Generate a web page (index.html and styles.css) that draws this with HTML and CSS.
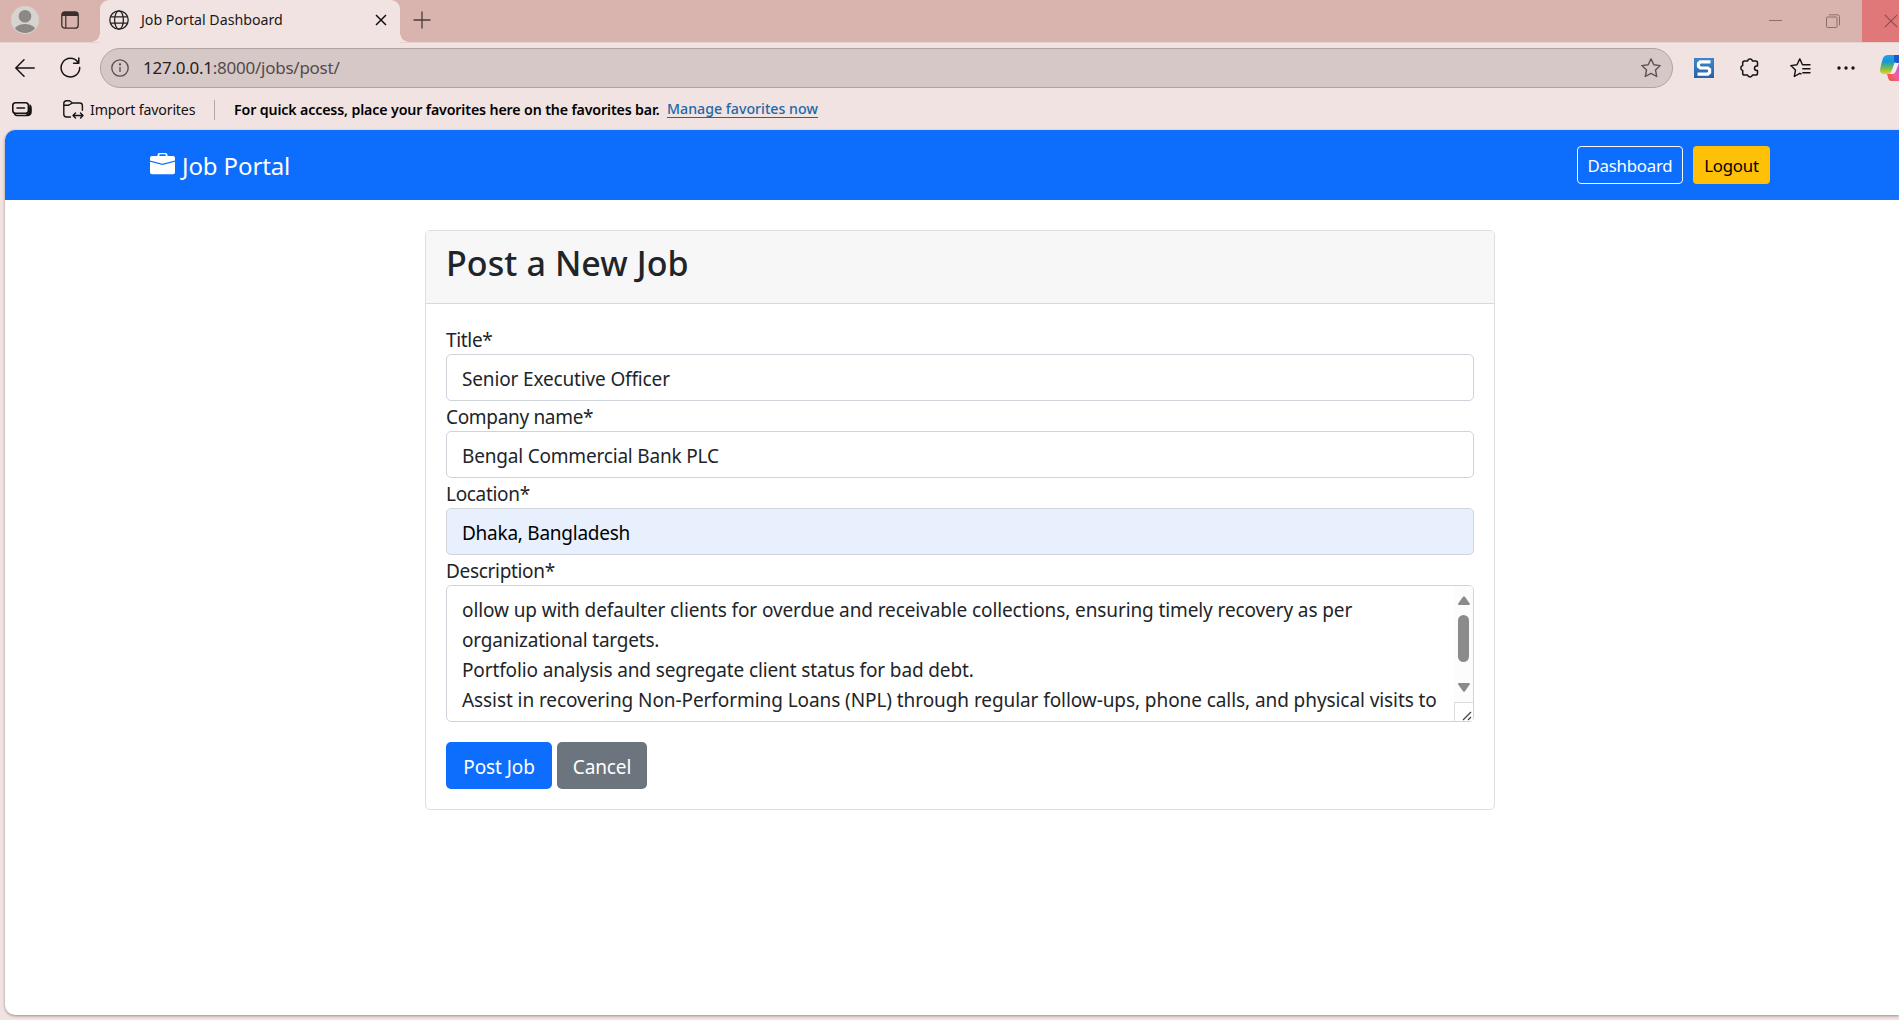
FILE: index.html
```html
<!DOCTYPE html>
<html lang="en">
<head>
<meta charset="utf-8">
<title>Job Portal Dashboard</title>
<link rel="stylesheet" href="styles.css">
</head>
<body>
<header class="tabstrip">
  <div class="tabstrip-left">
    <svg class="avatar" width="28" height="28" viewBox="0 0 28 28"><defs><clipPath id="avatar-clip"><circle cx="14" cy="14" r="13"/></clipPath></defs><circle cx="14" cy="14" r="14" fill="#d6d3d0"/><g clip-path="url(#avatar-clip)" fill="#8b8885"><circle cx="14" cy="10.3" r="6.3"/><ellipse cx="14" cy="25" rx="11" ry="7"/></g></svg>
    <svg class="tab-actions" width="18" height="18" viewBox="0 0 18 18"><rect x=".8" y=".8" width="16.4" height="16.4" rx="3" fill="none" stroke="#3b2f2e" stroke-width="1.3"/><path d="M1 5V3a2 2 0 0 1 2-2h12a2 2 0 0 1 2 2v2z" fill="#3b2f2e"/><path d="M4.8 5v12" stroke="#3b2f2e" stroke-width="1.2"/></svg>
  </div>
  <div class="tab">
    <svg width="20" height="20" viewBox="0 0 20 20" fill="none" stroke="#222" stroke-width="1.3"><circle cx="10" cy="10" r="9.2"/><ellipse cx="10" cy="10" rx="4.4" ry="9.2"/><path d="M1.5 6.8h17M1.5 13.2h17"/></svg>
    <span class="tab-title">Job Portal Dashboard</span>
    <svg class="tab-close" width="12" height="12" viewBox="0 0 12 12"><path d="M1 1l10 10M11 1L1 11" stroke="#111" stroke-width="1.5"/></svg>
  </div>
  <svg class="new-tab" width="18" height="18" viewBox="0 0 18 18"><path d="M9 .5v17M.5 9h17" stroke="#4a3d3c" stroke-width="1.3"/></svg>
  <div class="window-buttons">
    <span class="win"><svg width="13" height="13" viewBox="0 0 13 13"><path d="M0 5.5h13" stroke="#8a6f6c"/></svg></span>
    <span class="win"><svg width="14" height="14" viewBox="0 0 14 14" fill="none" stroke="#8a6f6c"><rect x=".5" y="3" width="10.5" height="10.5" rx="1"/><path d="M3 .8h8.5a2 2 0 0 1 2 2v8.5"/></svg></span>
    <span class="win win-close"><svg width="14" height="14" viewBox="0 0 14 14"><path d="M.8 .8l12.4 12.4M13.2 .8L.8 13.2" stroke="#8d4b4d" stroke-width="1.1"/></svg></span>
  </div>
</header>
<div class="toolbar">
  <svg class="back" width="20" height="18" viewBox="0 0 20 18" fill="none" stroke="#161313" stroke-width="1.5" stroke-linecap="round" stroke-linejoin="round"><path d="M19.2 9H1M9 .8L.8 9 9 17.2"/></svg>
  <svg class="reload" width="21" height="21" viewBox="0 0 21 21" fill="none" stroke="#161313" stroke-width="1.5" stroke-linecap="round" stroke-linejoin="round"><path d="M19.7 10.5A9.3 9.3 0 1 1 17.8 5M18.8 1v5.2h-5.2"/></svg>
  <div class="address">
    <svg width="18" height="18" viewBox="0 0 18 18" fill="none" stroke="#554c4c" stroke-width="1.3"><circle cx="9" cy="9" r="8.2"/><path d="M9 8v5"/><circle cx="9" cy="5.4" r=".5" fill="#554c4c"/></svg>
    <span class="url">127.0.0.1<span class="path">:8000/jobs/post/</span></span>
    <svg class="star" width="20" height="20" viewBox="0 0 20 20" fill="none" stroke="#5c5353" stroke-width="1.4" stroke-linejoin="round"><path d="M10 .9l2.8 5.8 6.4.9-4.7 4.4 1.2 6.5L10 15.4l-5.7 3.1 1.2-6.5L.8 7.6l6.4-.9z"/></svg>
  </div>
  <svg class="snag" width="20" height="20" viewBox="0 0 20 20"><defs><linearGradient id="snag-fill" x2="0" y2="1"><stop stop-color="#3f86c8"/><stop offset="1" stop-color="#2861a8"/></linearGradient></defs><path d="M0 0h20v20H0z" fill="url(#snag-fill)"/><path d="M16.5 3.8H6.3L4.5 5.5v3l1.8 1.5h7.5l1.8 1.5v3l-1.8 1.7H3.5" fill="none" stroke="#fff" stroke-width="3.2"/></svg>
  <svg class="puzzle" width="20" height="20" viewBox="0 0 20 20" fill="none" stroke="#161313" stroke-width="1.5" stroke-linejoin="round"><path d="M4.5 3h3a2.6 2.6 0 0 1 5 0h3.2q1.8 0 1.8 1.8V8h-.8a2.2 2.2 0 0 0 0 4.4h.8v2.8q0 1.8-1.8 1.8h-3.2a2.6 2.6 0 0 1-5 0h-3q-1.8 0-1.8-1.8v-2.7a2.6 2.6 0 0 1 0-5V4.8Q2.700 3 4.500 3z"/></svg>
  <span class="tool-divider"></span>
  <svg class="favorites" width="21" height="20" viewBox="0 0 21 20" fill="none" stroke="#161313" stroke-width="1.4" stroke-linejoin="round" stroke-linecap="round"><path d="M11 15.900l-1.200-.6-5.500 3.200 1.200-6.500L.8 7.600l6.200-.9L9.800 .9l2.700 5.800H20M12.800 10.700H20M12.800 14.700H20"/></svg>
  <svg class="more" width="18" height="4" viewBox="0 0 18 4" fill="#161313"><circle cx="2" cy="2" r="1.700"/><circle cx="9" cy="2" r="1.700"/><circle cx="16" cy="2" r="1.700"/></svg>
  <svg class="copilot" width="20" height="26" viewBox="0 0 20 26"><defs><linearGradient id="cop-a" x2="0" y2="1"><stop stop-color="#18a5e8"/><stop offset=".35" stop-color="#1996d8"/><stop offset=".65" stop-color="#62b85c"/><stop offset="1" stop-color="#f2cf19"/></linearGradient><linearGradient id="cop-b" x1="1" x2="0" y2="1"><stop stop-color="#a95de8"/><stop offset=".5" stop-color="#f0609b"/><stop offset="1" stop-color="#f2522d"/></linearGradient></defs><path d="M20 8h-2l-5 11H7l1.500 5q.7 2 2.500 2h9z" fill="url(#cop-b)"/><path d="M8 0h10l-5 14q-2 5-5 5H4q-4 0-4-4Q1 9 3 3 4.500 0 8 0z" fill="url(#cop-a)"/><path d="M14 0h6v8h-3q-3 0-3-4z" fill="#1f55cf"/><path d="M14.500 8H19l-3.500 9q-1 2-4 2H10l2-4z" fill="#f7ecea"/></svg>
</div>
<div class="favbar">
  <svg width="20" height="15" viewBox="0 0 20 15" fill="none" stroke="#161313" stroke-width="1.600" stroke-linecap="round"><rect x=".8" y=".8" width="15.600" height="10.400" rx="2.800"/><path d="M5 6h7.500M18 3.200q1 1 1 2.800v3.500q0 4-4 4H5.500q-1.800 0-2.700-1M17.500 5v5q-.4 2.300-2.500 2.300"/></svg>
  <svg class="folder" width="21" height="19" viewBox="0 0 21 19" fill="none" stroke="#161313" stroke-width="1.400" stroke-linejoin="round" stroke-linecap="round"><path d="M7.500 17H3.500Q.8 17 .8 14.300V3.500Q.8 .8 3.500 .8h3L9.500 3h7.200q2.700 0 2.700 2.700v4.500M.8 5.200h4.800L9.500 3M10 15.500h10M12.500 13L10 15.500l2.500 2.500M17.500 13l2.500 2.500-2.500 2.500"/></svg>
  <span class="import">Import favorites</span>
  <span class="fav-divider"></span>
  <span class="hint">For quick access, place your favorites here on the favorites bar.</span>
  <a class="manage">Manage favorites now</a>
</div>
<main class="page">
  <nav class="navbar">
    <svg width="25" height="22" viewBox="0 0 25 22" fill="#fff"><path fill-rule="evenodd" d="M7.500 3V2q0-2 2-2h6q2 0 2 2v1H23q2 0 2 2v2.500l-12.500 3.300L0 7.500V5q0-2 2-2zM9.300 3h6.400V2q0-.7-.7-.7h-5q-.7 0-.7.7z"/><path d="M0 8.800l12.500 3.300L25 8.800v10.700q0 1.800-2 1.800H2q-2 0-2-1.800z"/></svg>
    <span class="brand">Job Portal</span>
    <a class="nav-button outline"><span>Dashboard</span></a>
    <a class="nav-button warning"><span>Logout</span></a>
  </nav>
  <section class="card">
    <div class="card-header"><h2>Post a New Job</h2></div>
    <form class="card-body">
      <label for="title">Title*</label>
      <input class="control c-title" id="title" value="Senior Executive Officer">
      <label for="company">Company name*</label>
      <input class="control c-company" id="company" value="Bengal Commercial Bank PLC">
      <label for="location">Location*</label>
      <input class="control c-location" id="location" value="Dhaka, Bangladesh">
      <label>Description*</label>
      <div class="description">
        <div class="lines">
          <p class="line1">ollow up with defaulter clients for overdue and receivable collections, ensuring timely recovery as per</p>
          <p class="line2">organizational targets.</p>
          <p class="line3">Portfolio analysis and segregate client status for bad debt.</p>
          <p class="line4">Assist in recovering Non-Performing Loans (NPL) through regular follow-ups, phone calls, and physical visits to</p>
        </div>
        <div class="scroll">
          <svg width="12" height="9" viewBox="0 0 12 9"><path d="M5 .8q1-1.200 2 0l4.700 6.700q.6 1.500-.8 1.500H1q-1.400 0-.8-1.500z" fill="#8b8b8b"/></svg>
          <span class="thumb"></span>
          <svg class="down" width="12" height="9" viewBox="0 0 12 9"><path d="M5 8.200q1 1.200 2 0l4.700-6.700Q12.300 0 10.900 0H1Q-.4 0 .2 1.500z" fill="#8b8b8b"/></svg>
          <span class="grip"><svg width="10" height="10" viewBox="0 0 10 10" stroke="#444" stroke-width="1.300"><path d="M1 9l8-8M6 9l3-3"/></svg></span>
        </div>
      </div>
      <div class="actions">
        <button class="btn primary" type="button">Post Job</button>
        <button class="btn secondary" type="button">Cancel</button>
      </div>
    </form>
  </section>
</main>
</body>
</html>
```
FILE: styles.css
```css
* { box-sizing: border-box; }
body {
  margin: 0;
  width: 1899px;
  height: 1020px;
  overflow: hidden;
  display: flex;
  flex-direction: column;
  background: #f1e3e1;
  color: #212529;
  font: 19px/30px "Noto Sans", "Open Sans", sans-serif;
  white-space: nowrap;
}
svg { display: block; flex: none; }

/* Tab strip */
.tabstrip {
  height: 43px; flex: none; display: flex; align-items: flex-start;
  background: linear-gradient(#d9b3ad 42px, #e8d2cf 42px);
}
.tabstrip-left { width: 100px; height: 42px; padding: 6px 0 0 11px; display: flex; gap: 22px; }
.tab-actions { margin-top: 5px; }
.tab {
  position: relative;
  width: 300px; height: 43px; padding: 0 13px 3px 9px;
  display: flex; align-items: center;
  background: #f1e3e1; border-radius: 9px 9px 0 0;
}
.tab::before, .tab::after {
  content: ""; position: absolute; bottom: 1px; width: 9px; height: 9px;
}
.tab::before { left: -9px; background: radial-gradient(circle at 0 0, transparent 8.5px, #f1e3e1 9px); }
.tab::after { right: -9px; background: radial-gradient(circle at 100% 0, transparent 8.5px, #f1e3e1 9px); }
.tab-title { margin-left: 12px; font-size: 14.2px; color: #1b1818; }
.tab-close { margin-left: auto; }
.new-tab { margin: 11px 0 0 13px; }
.window-buttons { margin-left: auto; height: 42px; display: flex; }
.win { width: 57.5px; height: 42px; display: flex; align-items: center; justify-content: center; }
.win-close { width: 37px; padding-left: 22px; background: #e07779; justify-content: flex-start; }

/* Address row */
.toolbar { height: 49px; flex: none; display: flex; align-items: center; padding: 0 0 0 15px; }
.reload { margin-left: 25px; }
.address {
  width: 1573px; height: 40px; margin-left: 19px; padding: 0 11px 0 10px;
  display: flex; align-items: center; flex: none;
  border: 1px solid #b1a3a3; border-radius: 20px; background: #d6c8c7;
}
.url { margin-left: 14px; font-size: 17px; letter-spacing: -.25px; color: #272121; }
.path { color: #554b4b; }
.star { margin-left: auto; }
.snag { margin-left: 21px; }
.puzzle { margin-left: 26px; }
.tool-divider { width: 1px; height: 20px; margin-left: 15px; background: #b5a7a6; }
.favorites { margin-left: 15px; }
.more { margin-left: 26px; }
.copilot { margin-left: 25px; }

/* Favorites bar */
.favbar { height: 38px; flex: none; display: flex; align-items: center; padding: 0 0 3px 12px; font-size: 14.2px; color: #141111; }
.folder { margin-left: 31px; }
.import { margin-left: 6px; width: 106px; letter-spacing: -.18px; }
.fav-divider { width: 1px; height: 20px; margin-left: 18px; background: #b5a7a6; }
.hint { width: 427px; margin-left: 19px; font-weight: 600; letter-spacing: -.13px; color: #000; }
.manage { margin-left: 6px; font-weight: 500; color: #1f68a8; line-height: 16px; border-bottom: 1px solid #1f68a8; }

/* Web page */
.page {
  height: 885px; margin-left: 5px; flex: none; overflow: hidden;
  background: #fff; border-radius: 10px 0 0 10px;
  box-shadow: 0 1px 3px #9b8a88;
}
.navbar { height: 70px; padding: 0 129px 0 145px; display: flex; align-items: center; background: #0d6efd; }
.navbar svg { margin-top: -2px; }
.brand { margin: 2px 0 0 7px; color: #fff; font-size: 24px; letter-spacing: -.12px; }
.nav-button { width: 106px; height: 38px; padding-top: 2px; display: flex; align-items: center; justify-content: center; border-radius: 4px; font-size: 16.8px; letter-spacing: -.22px; }
.outline { margin-left: auto; border: 1px solid #f8f9fa; color: #fff; }
.warning { width: 77px; margin-left: 10px; background: #ffc107; color: #000; }
.card { width: 1070px; height: 580px; margin: 30px 0 0 420px; border: 1px solid #dfdfdf; border-radius: 5px; overflow: hidden; }
.card-header { height: 73px; padding: 9px 20px; background: #f7f7f7; border-bottom: 1px solid #d9d9d9; }
h2 { margin: 0; font-size: 34px; font-weight: 500; line-height: 46px; letter-spacing: .1px; }
.card-body { padding: 20px; display: flex; flex-direction: column; }
label { height: 30px; padding-top: 1px; align-self: flex-start; letter-spacing: -.32px; }
.control {
  width: 1028px; height: 47px; padding: 2px 15px 0;
  border: 1px solid #ced4da; border-radius: 5px; outline: none;
  background: #fff; color: #212529; font: inherit;
}
.c-title { letter-spacing: -.15px; }
.c-company { letter-spacing: -.19px; }
.c-location { background: #e8f0fe; color: #000; letter-spacing: -.25px; }
.description { width: 1028px; height: 137px; display: flex; justify-content: space-between; border: 1px solid #ced4da; border-radius: 5px; overflow: hidden; }
.lines { padding: 9px 0 0 15px; }
.lines p { margin: 0; height: 30px; }
.line1 { letter-spacing: -.106px; }
.line2 { letter-spacing: -.2px; }
.line3 { letter-spacing: -.13px; }
.line4 { letter-spacing: -.077px; }
.scroll { width: 19px; flex: none; display: flex; flex-direction: column; align-items: center; padding-top: 10px; background: #fcfcfc; }
.thumb { width: 11px; height: 47px; margin-top: 10px; border-radius: 6px; background: #8b8b8b; }
.down { margin-top: 21px; }
.grip { width: 19px; height: 19px; margin-top: 10px; padding: 8px 0 0 7px; border: solid #dcdcdc; border-width: 1px 0 0 1px; background: #fff; }
.actions { margin-top: 20px; display: flex; gap: 5px; }
.btn { height: 47px; padding: 2px 0 0; border: 0; border-radius: 5px; color: #fff; font: inherit; letter-spacing: -.1px; }
.primary { width: 106px; background: #0d6efd; }
.secondary { width: 90px; background: #6c757d; }
```
